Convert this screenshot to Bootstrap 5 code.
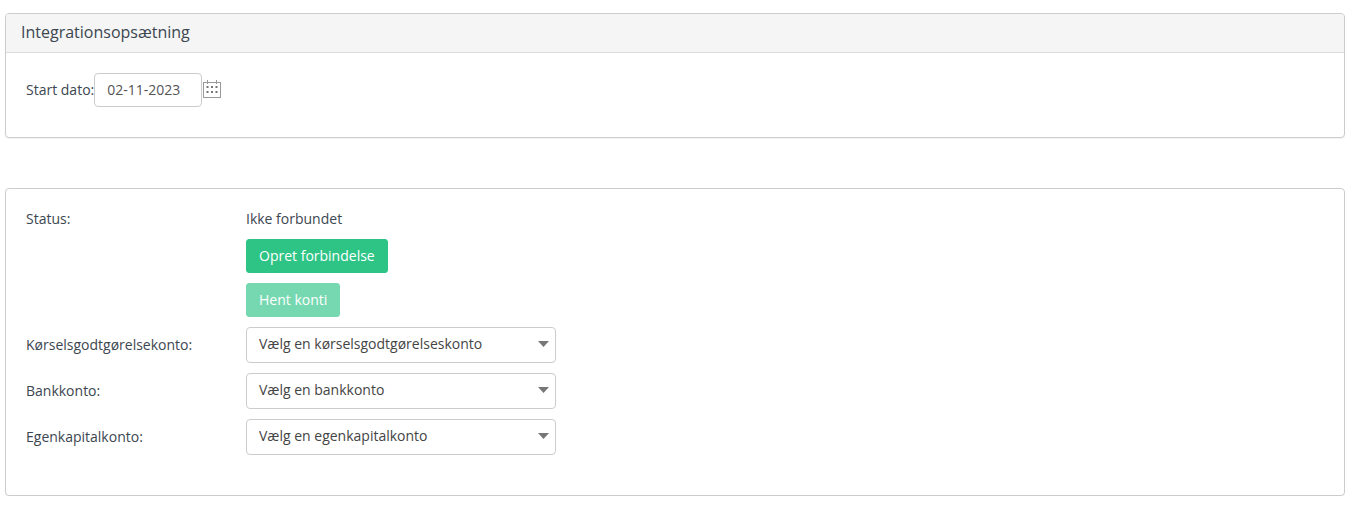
<!DOCTYPE html>
<html lang="da">
<head>
<meta charset="utf-8">
<title>Integrationsopsætning</title>
<link href="https://cdn.jsdelivr.net/npm/bootstrap@5.3.0/dist/css/bootstrap.min.css" rel="stylesheet">
<style>
body{font-family:"Open Sans",sans-serif;font-size:14px;line-height:20px;color:#3c4650;background:#fff;padding:13px 8px 0 5px}
.pane{border:1px solid #ccc;border-radius:4px;box-shadow:0 1px 1px rgba(0,0,0,.05);margin-bottom:50px}
.pane:last-of-type{margin-bottom:0}
.pane .card-header{background:#f5f5f5;border-bottom:1px solid #ddd;font-size:16px;line-height:22px;padding:7px 15px 9px;height:39px;color:#3c4650;border-radius:3px 3px 0 0}
.pane .card-body{padding:20px 20px 20px}
.pane .card-body.tall{padding-bottom:30px}
.line{margin-bottom:10px}
.stack{gap:10px}
.date-in{width:108px;height:34px;font-size:14px;line-height:20px;padding:5px 12px 7px;border:1px solid #ccc;border-radius:4px;color:#555;font-family:inherit}
.cal{margin:0 0 2px 1px;flex:none}
.lbl-col{width:220px;flex:none}
.val-col{width:310px;flex:none}
.btn-go{background:#2dc486;border:1px solid #2dc486;color:#fff;font-size:14px;line-height:20px;padding:6px 12px;border-radius:3px}
.btn-go:disabled{background:#2dc486;border-color:#2dc486;color:#fff;opacity:.65}
.pick{height:36px;font-size:14px;line-height:20px;padding:6px 30px 8px 12px;border:1px solid #ccc;border-radius:4px;color:#444;font-family:inherit;background-size:11px 6px;background-position:right 6px top 13px;background-image:url("data:image/svg+xml,%3Csvg xmlns='http://www.w3.org/2000/svg' viewBox='0 0 11 6'%3E%3Cpath fill='%23777' d='M0 0h11L5.500 6z'/%3E%3C/svg%3E")}
</style>
</head>
<body>
<div class="card pane">
  <div class="card-header">Integrationsopsætning</div>
  <div class="card-body">
    <div class="d-flex align-items-center line">
      <label for="startdato">Start dato:</label>
      <input id="startdato" class="form-control date-in" type="text" value="02-11-2023">
      <svg class="cal" width="18" height="18" viewBox="0 0 18 18" fill="none" stroke="#999" aria-hidden="true">
        <rect x=".5" y="2.500" width="17" height="15"/>
        <path d="M4.500 0v4M13.500 0v4"/>
        <path stroke="none" fill="#777" d="M3.500 6h2v2h-2zM8 6h2v2H8zM12.500 6h2v2h-2zM3.500 11h2v2h-2zM8 11h2v2H8zM12.500 11h2v2h-2z"/>
      </svg>
    </div>
  </div>
</div>
<div class="card pane">
  <div class="card-body tall">
    <div class="d-flex line">
      <div class="lbl-col">Status:</div>
      <div class="val-col">Ikke forbundet</div>
    </div>
    <div class="d-flex line">
      <div class="lbl-col"></div>
      <div class="val-col d-flex flex-column align-items-start stack">
        <button type="button" class="btn btn-go">Opret forbindelse</button>
        <button type="button" class="btn btn-go" disabled>Hent konti</button>
      </div>
    </div>
    <div class="d-flex align-items-center line">
      <label class="lbl-col">Kørselsgodtgørelsekonto:</label>
      <div class="val-col"><select class="form-select pick"><option>Vælg en kørselsgodtgørelseskonto</option></select></div>
    </div>
    <div class="d-flex align-items-center line">
      <label class="lbl-col">Bankkonto:</label>
      <div class="val-col"><select class="form-select pick"><option>Vælg en bankkonto</option></select></div>
    </div>
    <div class="d-flex align-items-center line">
      <label class="lbl-col">Egenkapitalkonto:</label>
      <div class="val-col"><select class="form-select pick"><option>Vælg en egenkapitalkonto</option></select></div>
    </div>
  </div>
</div>
<script src="https://cdn.jsdelivr.net/npm/bootstrap@5.3.0/dist/js/bootstrap.bundle.min.js"></script>
</body>
</html>
